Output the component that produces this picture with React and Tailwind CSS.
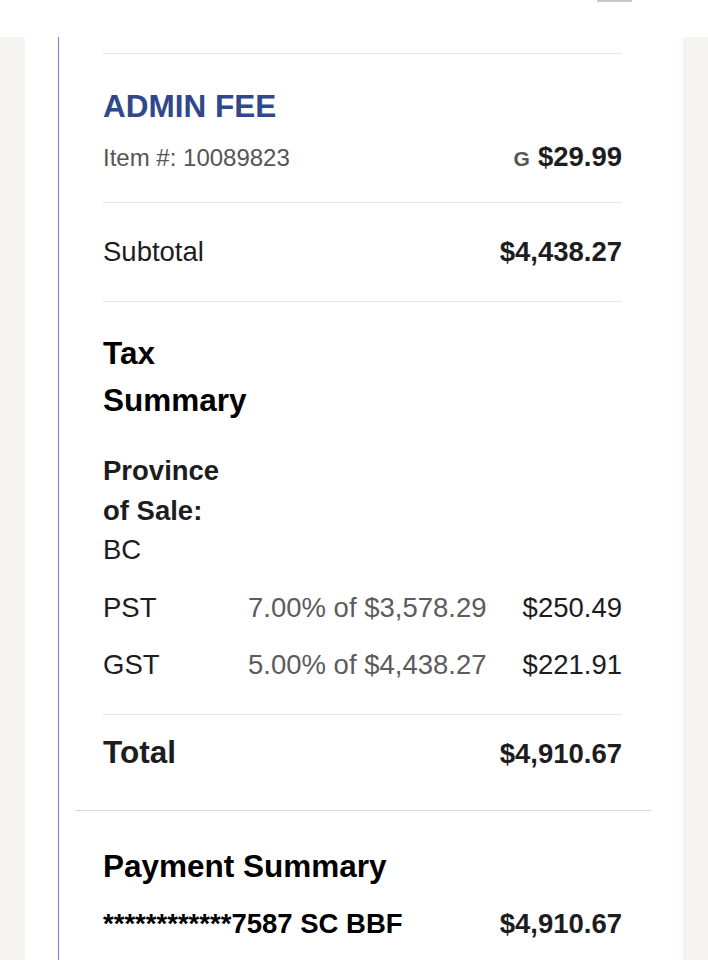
import React from 'react';

const taxes = [
  { name: 'PST', rate: '7.00% of $3,578.29', amount: '$250.49', top: 'mt-[20px]' },
  { name: 'GST', rate: '5.00% of $4,438.27', amount: '$221.91', top: 'mt-[19px]' },
];

const Divider = () => <div className="h-px bg-[#e3e3e3]" />;

const App = () => {
  return (
    <div className="min-h-screen bg-[#f5f4f3] font-['Liberation_Sans',Arial,sans-serif] text-[#1d1d1f]">
      {/* top bar, scrolled mostly out of view */}
      <div className="h-[37px] bg-white overflow-hidden relative">
        <div className="absolute left-[597px] top-0 w-[35px] h-[2px] bg-[#c8c8c8]" />
      </div>

      <div className="mx-[25px] bg-white">
        <div className="ml-[33px] border-l border-[#7b7bc9] pb-[40px]">
          <div className="pl-[44px] pr-[61px] pt-[16px]">
            <Divider />

            {/* line item */}
            <div className="mt-[34px] text-[31.5px] leading-[36px] font-bold text-[#30488a]">
              ADMIN FEE
            </div>
            <div className="mt-[17px] flex items-baseline justify-between">
              <span className="text-[24px] leading-[32px] text-[#555]">Item #: 10089823</span>
              <span className="leading-[32px]">
                <span className="text-[21px] font-bold text-[#555] mr-[8px]">G</span>
                <span className="text-[27.5px] font-bold">$29.99</span>
              </span>
            </div>
            <div className="mt-[25px]">
              <Divider />
            </div>

            {/* subtotal */}
            <div className="mt-[33px] flex items-baseline justify-between text-[27.5px] leading-[32px]">
              <span>Subtotal</span>
              <span className="font-bold">$4,438.27</span>
            </div>
            <div className="mt-[33px]">
              <Divider />
            </div>

            {/* tax summary */}
            <h2 className="mt-[28px] text-[31.5px] leading-[47px] font-bold text-black">
              Tax
              <br />
              Summary
            </h2>
            <div className="mt-[27px] text-[27.5px] leading-[40px] font-bold">
              Province
              <br />
              of Sale:
            </div>
            <div className="text-[27.5px] leading-[38px]">BC</div>

            {taxes.map((t) => (
              <div
                key={t.name}
                className={`${t.top} grid grid-cols-[145px_1fr_auto] text-[27.5px] leading-[38px]`}
              >
                <span>{t.name}</span>
                <span className="text-[#5c5c5c]">{t.rate}</span>
                <span className="text-right">{t.amount}</span>
              </div>
            ))}

            <div className="mt-[30px]">
              <Divider />
            </div>

            {/* total */}
            <div className="mt-[19px] flex items-baseline justify-between leading-[36px]">
              <span className="text-[31.5px] font-bold">Total</span>
              <span className="text-[27.5px] font-bold">$4,910.67</span>
            </div>
          </div>

          <div className="mt-[38px] ml-[16px] mr-[32px] h-px bg-[#d9d9d9]" />

          {/* payment */}
          <div className="pl-[44px] pr-[61px]">
            <h2 className="mt-[37px] text-[31.5px] leading-[36px] font-bold text-black">
              Payment Summary
            </h2>
            <div className="mt-[24px] flex items-baseline justify-between text-[27.5px] leading-[32px] font-bold">
              <span className="text-black">************7587 SC BBF</span>
              <span>$4,910.67</span>
            </div>
          </div>
        </div>
      </div>
    </div>
  );
};

export default App;
